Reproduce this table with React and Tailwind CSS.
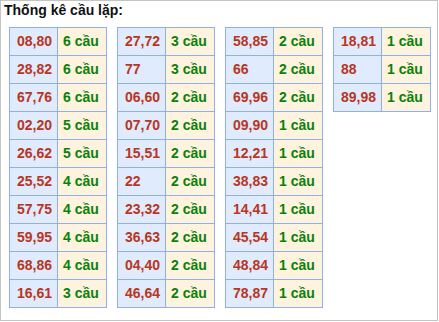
import React from "react";

const tables = [
  [
    ["08,80", 6], ["28,82", 6], ["67,76", 6], ["02,20", 5], ["26,62", 5],
    ["25,52", 4], ["57,75", 4], ["59,95", 4], ["68,86", 4], ["16,61", 3],
  ],
  [
    ["27,72", 3], ["77", 3], ["06,60", 2], ["07,70", 2], ["15,51", 2],
    ["22", 2], ["23,32", 2], ["36,63", 2], ["04,40", 2], ["46,64", 2],
  ],
  [
    ["58,85", 2], ["66", 2], ["69,96", 2], ["09,90", 1], ["12,21", 1],
    ["38,83", 1], ["14,41", 1], ["45,54", 1], ["48,84", 1], ["78,87", 1],
  ],
  [["18,81", 1], ["88", 1], ["89,98", 1]],
];

function CountTable({ rows }) {
  return (
    <div className="w-[98px] border-l border-t border-[#8eb1ee]">
      {rows.map(([pair, count]) => (
        <div key={pair} className="flex h-[28px]">
          <div className="w-[48px] flex items-center pl-[7px] bg-[#e0ebfd] border-r border-b border-[#8eb1ee] text-[#b8361f]">
            {pair}
          </div>
          <div className="w-[49px] flex items-center pl-[5px] bg-[#fdf3df] border-r border-b border-[#8eb1ee] text-[#0a820a]">
            {count} cầu
          </div>
        </div>
      ))}
    </div>
  );
}

export default function App() {
  return (
    <div
      className="w-[438px] h-[321px] border border-[#c4c4c4] bg-white"
      style={{ fontFamily: '"Liberation Sans", Arial, sans-serif' }}
    >
      <div className="pl-[3px] pt-[1px] text-[14px] leading-[16px] font-bold text-[#111]">
        Thống kê cầu lặp:
      </div>
      {/* bảng thống kê */}
      <div className="flex items-start gap-[10px] pl-[8px] pt-[9px] text-[14px] font-bold">
        {tables.map((rows, i) => (
          <CountTable key={i} rows={rows} />
        ))}
      </div>
    </div>
  );
}
